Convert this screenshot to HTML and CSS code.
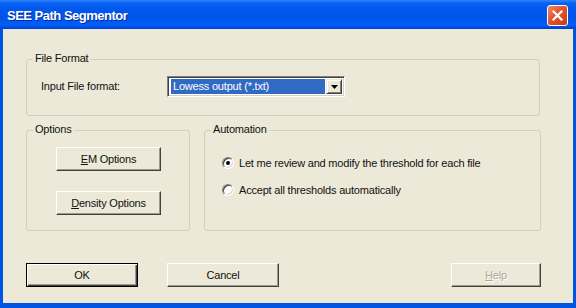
FILE: index.html
```html
<!DOCTYPE html>
<html>
<head>
<meta charset="utf-8">
<link rel="stylesheet" href="styles.css">
</head>
<body>
<div class="window">
  <div class="titlebar">
    <span class="title">SEE Path Segmentor</span>
    <span class="close">
      <svg width="13" height="13" viewBox="0 0 13 13"><path d="M2.5 2.5 L10.5 10.5 M10.5 2.5 L2.5 10.5" stroke="#fff" stroke-width="2.2" stroke-linecap="square"/></svg>
    </span>
  </div>
  <div class="client">
    <div class="group file-group">
      <span class="legend">File Format</span>
      <div class="file-row">
        <span class="field-label">Input File format:</span>
        <div class="combo">
          <span class="combo-value">Lowess output (*.txt)</span>
          <span class="combo-btn">
            <svg width="7" height="4" viewBox="0 0 7 4"><path d="M0 0 H7 L3.5 4 Z" fill="#000"/></svg>
          </span>
        </div>
      </div>
    </div>
    <div class="group-row">
      <div class="group options-group">
        <span class="legend">Options</span>
        <div class="options-buttons">
          <span class="btn opt-btn"><u>E</u>M Options</span>
          <span class="btn opt-btn"><u>D</u>ensity Options</span>
        </div>
      </div>
      <div class="group auto-group">
        <span class="legend">Automation</span>
        <div class="radios">
          <div class="radio-row"><span class="radio checked"></span><span>Let me review and modify the threshold for each file</span></div>
          <div class="radio-row"><span class="radio"></span><span>Accept all thresholds automatically</span></div>
        </div>
      </div>
    </div>
    <div class="dialog-buttons">
      <span class="btn main-btn default">OK</span>
      <span class="btn main-btn">Cancel</span>
      <span class="spacer"></span>
      <span class="btn help-btn disabled"><u>H</u>elp</span>
    </div>
  </div>
</div>
</body>
</html>
```
FILE: styles.css
```css
html, body {
  margin: 0;
  padding: 0;
  background: #ffffff;
}
body {
  font-family: "Liberation Sans", Arial, sans-serif;
  font-size: 11px;
  letter-spacing: -0.2px;
  color: #111;
}
.window {
  width: 576px;
  height: 308px;
  background: #0054e3;
  display: flex;
  flex-direction: column;
  overflow: hidden;
}
.titlebar {
  height: 29px;
  flex: none;
  display: flex;
  align-items: center;
  padding: 0 8px 0 7px;
  background: linear-gradient(#2e86ff 0px, #0a62f4 3px, #0058ee 8px, #0055ea 18px, #0060f8 25px, #003dd0 29px);
}
.title {
  flex: 1;
  color: #fff;
  font-weight: bold;
  font-size: 13px;
  letter-spacing: -0.5px;
  text-shadow: 1px 1px #0a2a9a;
  padding-top: 2px;
}
.close {
  width: 19px;
  height: 19px;
  border: 1px solid #fff;
  border-radius: 3px;
  background: linear-gradient(135deg, #f08a66 0%, #e0552e 45%, #c83a18 100%);
  display: flex;
  align-items: center;
  justify-content: center;
  margin-top: 2px;
}
.close svg { display: block; }
.client {
  flex: 1;
  margin: 0 3px 5px 3px;
  background: #ece9d8;
  padding: 30px 0 0 23px;
  display: flex;
  flex-direction: column;
}
.group {
  position: relative;
  border: 1px solid #d0d0bf;
  border-radius: 3px;
  box-sizing: border-box;
}
.legend {
  position: absolute;
  top: -8px;
  left: 6px;
  padding: 0 2px;
  background: #ece9d8;
  line-height: 13px;
}
.file-group {
  width: 514px;
  height: 57px;
}
.file-row {
  display: flex;
  align-items: center;
  padding: 16px 0 0 14px;
}
.field-label {
  width: 126px;
  margin-top: -2px;
}
.combo {
  width: 178px;
  height: 21px;
  box-sizing: border-box;
  border: 1px solid;
  border-color: #808080 #ffffff #ffffff #808080;
  box-shadow: inset 1px 1px #404040, inset -1px -1px #d4d0c8;
  background: #fff;
  display: flex;
  padding: 2px 2px 2px 3px;
}
.combo-value {
  flex: 1;
  background: #316ac5;
  color: #fff;
  line-height: 15px;
  padding-left: 2px;
  margin-right: 1px;
}
.combo-btn {
  width: 16px;
  box-sizing: border-box;
  background: #ece9d8;
  border: 1px solid;
  border-color: #ece9d8 #404040 #404040 #ece9d8;
  box-shadow: inset 1px 1px #fff, inset -1px -1px #808080;
  display: flex;
  align-items: center;
  justify-content: center;
}
.combo-btn svg { display: block; }
.group-row {
  display: flex;
  gap: 14px;
  margin-top: 14px;
}
.options-group {
  width: 164px;
  height: 101px;
}
.options-buttons {
  display: flex;
  flex-direction: column;
  gap: 20px;
  padding: 16px 0 0 29px;
}
.btn {
  display: flex;
  align-items: center;
  justify-content: center;
  box-sizing: border-box;
  height: 24px;
  background: #ece9d8;
  border: 1px solid;
  border-color: #ffffff #404040 #404040 #ffffff;
  box-shadow: inset -1px -1px #9d9a8c;
}
.opt-btn {
  width: 105px;
}
.auto-group {
  width: 337px;
  height: 101px;
}
.radios {
  display: flex;
  flex-direction: column;
  gap: 15px;
  padding: 26px 0 0 17px;
}
.radio-row {
  display: flex;
  align-items: center;
  gap: 5px;
  height: 12px;
}
.radio {
  width: 12px;
  height: 12px;
  box-sizing: border-box;
  border-radius: 50%;
  border: 1px solid;
  border-color: #808080 #ffffff #ffffff #808080;
  box-shadow: inset 1px 1px #404040, inset -1px -1px #d4d0c8;
  background: #fff;
  display: flex;
  align-items: center;
  justify-content: center;
}
.radio.checked::after {
  content: "";
  width: 4px;
  height: 4px;
  border-radius: 50%;
  background: #000;
}
.dialog-buttons {
  display: flex;
  margin-top: 32px;
  width: 515px;
}
.main-btn {
  width: 112px;
  margin-right: 29px;
}
.main-btn.default {
  border: 1px solid #000;
  box-shadow: inset 1px 1px #fff, inset -1px -1px #404040, inset -2px -2px #9d9a8c;
}
.spacer { flex: 1; }
.help-btn {
  width: 90px;
}
.disabled {
  color: #aca899;
  text-shadow: 1px 1px #fff;
}
```
